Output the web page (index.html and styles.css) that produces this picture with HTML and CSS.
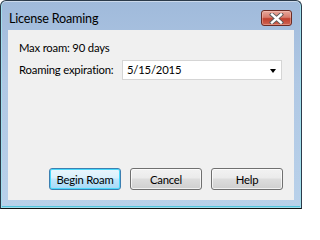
FILE: index.html
```html
<!DOCTYPE html>
<html>
<head>
<meta charset="utf-8">
<link rel="stylesheet" href="styles.css">
</head>
<body>
<div class="window">
  <div class="titlebar">
    <span class="title">License Roaming</span>
    <div class="close">
      <svg width="17" height="11" viewBox="0 0 17 11">
        <path d="M4 1.5 L13 9.5 M13 1.5 L4 9.5" stroke="#5a5a5a" stroke-width="4.2" stroke-linecap="square" fill="none"/>
        <path d="M4 1.5 L13 9.5 M13 1.5 L4 9.5" stroke="#ffffff" stroke-width="2.4" stroke-linecap="square" fill="none"/>
      </svg>
    </div>
  </div>
  <div class="client">
    <div class="row info">Max roam: 90 days</div>
    <div class="row field">
      <span class="label">Roaming expiration:</span>
      <div class="combo">
        <span class="value">5/15/2015</span>
        <span class="arrow"></span>
      </div>
    </div>
    <div class="buttons">
      <button class="btn default">Begin Roam</button>
      <button class="btn">Cancel</button>
      <button class="btn">Help</button>
    </div>
  </div>
</div>
</body>
</html>
```
FILE: styles.css
```css
html, body {
  margin: 0;
  padding: 0;
  background: #ffffff;
}
body {
  font-family: "Lato", "Open Sans", sans-serif;
  font-size: 11.3px;
  letter-spacing: -0.2px;
  color: #000;
}
.window {
  width: 302px;
  height: 209px;
  box-sizing: border-box;
  border: 1px solid #2b3a4a;
  border-bottom-color: #111;
  border-radius: 6px 6px 0 0;
  background: linear-gradient(180deg, #a0badb 0%, #b0c8e4 40%, #b9d1ea 100%);
  box-shadow: inset 0 0 0 1px rgba(255,255,255,0.45), inset 0 -1px 0 1px #52c4dc;
  display: flex;
  flex-direction: column;
  overflow: hidden;
}
.titlebar {
  height: 29px;
  display: flex;
  align-items: flex-start;
  justify-content: space-between;
  padding: 0 9px 0 8px;
}
.title {
  font-family: "Lato", "Open Sans", sans-serif;
  font-size: 12.6px;
  line-height: 18px;
  margin-top: 9px;
  color: #000;
  letter-spacing: -0.2px;
}
.close {
  width: 31px;
  height: 16px;
  box-sizing: border-box;
  margin-top: 9px;
  border: 1px solid #6b2b24;
  border-radius: 3px;
  background: linear-gradient(180deg, #e8a89c 0%, #d77c6d 45%, #c0402e 55%, #cf6352 100%);
  box-shadow: inset 0 0 0 1px rgba(255,220,210,0.35);
  display: flex;
  align-items: center;
  justify-content: center;
}
.close svg {
  display: block;
}
.client {
  flex: 1;
  margin: 0 7px 8px 7px;
  background: #f0f0f0;
  display: flex;
  flex-direction: column;
  padding: 10px 11px 10px 11px;
}
.info {
  line-height: 16px;
  height: 16px;
  white-space: nowrap;
}
.field {
  display: flex;
  align-items: center;
  margin-top: 4px;
}
.label {
  width: 103px;
  flex-shrink: 0;
  white-space: nowrap;
  line-height: 16px;
}
.combo {
  width: 160px;
  height: 20px;
  box-sizing: border-box;
  border: 1px solid #d5d5d5;
  background: #fff;
  display: flex;
  align-items: center;
  justify-content: space-between;
  padding: 0 5px 0 4px;
}
.value {
  line-height: 16px;
}
.arrow {
  width: 0;
  height: 0;
  border-left: 3.5px solid transparent;
  border-right: 3.5px solid transparent;
  border-top: 4px solid #000;
  margin-top: 1px;
}
.buttons {
  margin-top: auto;
  display: flex;
  justify-content: flex-end;
  gap: 9px;
}
.btn {
  width: 72px;
  height: 22px;
  box-sizing: border-box;
  margin: 0;
  padding: 0;
  font-family: "Lato", "Open Sans", sans-serif;
  font-size: 11.3px;
  letter-spacing: -0.2px;
  color: #000;
  border: 1px solid #707070;
  border-radius: 3px;
  background: linear-gradient(180deg, #f2f2f2 0%, #ebebeb 45%, #dddddd 50%, #cfcfcf 100%);
  box-shadow: inset 0 0 0 1px rgba(255,255,255,0.7);
}
.btn.default {
  border-color: #3c7fb1;
  background: linear-gradient(180deg, #eaf6fd 0%, #d9f0fc 45%, #bee6fd 50%, #a7d9f5 100%);
  box-shadow: inset 0 0 0 1px #48d8fb;
}
```
